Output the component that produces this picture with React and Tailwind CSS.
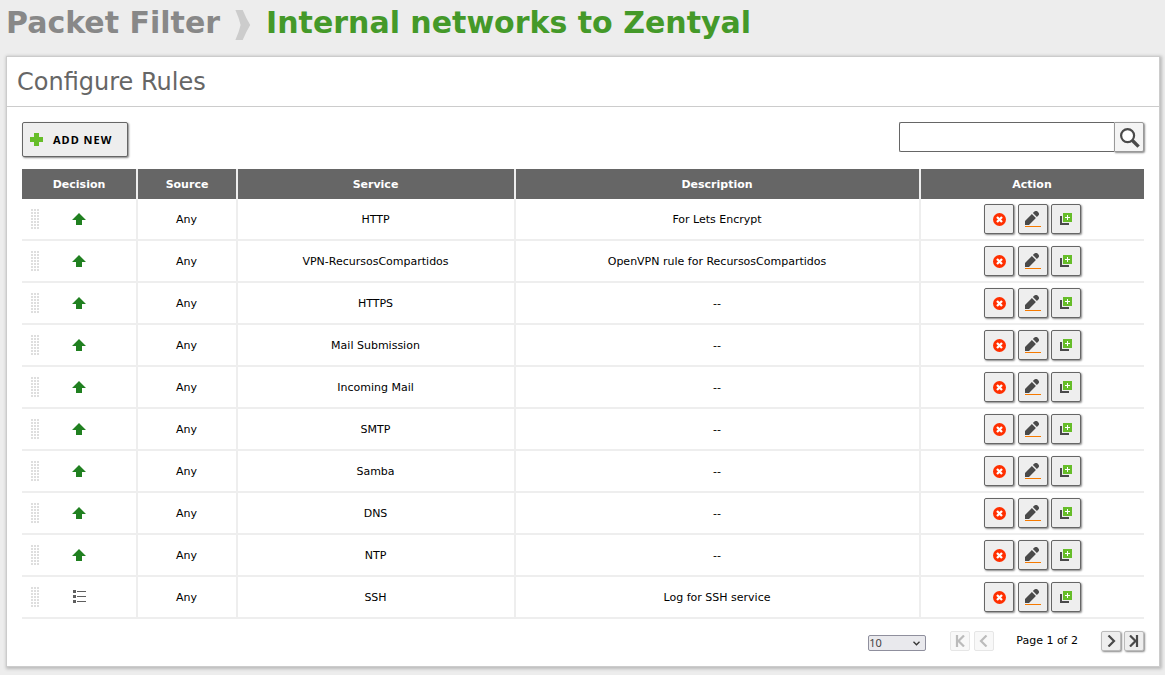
import React from "react";

const rules = [
  { decision: "accept", source: "Any", service: "HTTP", description: "For Lets Encrypt" },
  { decision: "accept", source: "Any", service: "VPN-RecursosCompartidos", description: "OpenVPN rule for RecursosCompartidos" },
  { decision: "accept", source: "Any", service: "HTTPS", description: "--" },
  { decision: "accept", source: "Any", service: "Mail Submission", description: "--" },
  { decision: "accept", source: "Any", service: "Incoming Mail", description: "--" },
  { decision: "accept", source: "Any", service: "SMTP", description: "--" },
  { decision: "accept", source: "Any", service: "Samba", description: "--" },
  { decision: "accept", source: "Any", service: "DNS", description: "--" },
  { decision: "accept", source: "Any", service: "NTP", description: "--" },
  { decision: "log", source: "Any", service: "SSH", description: "Log for SSH service" },
];

function Chevron() {
  return (
    <svg width="16" height="30" viewBox="0 0 16 30" aria-hidden="true">
      <path d="M0.4 0H7.7Q11 8 15.2 15Q11 22 7.7 30H0.4Q4 22 5.6 15Q4 8 0.4 0Z" fill="#cccccc" />
    </svg>
  );
}

function PlusIcon() {
  return (
    <svg width="13" height="13" viewBox="0 0 13 13" aria-hidden="true">
      <path d="M4 0H9V4H13V9H9V13H4V9H0V4H4Z" fill="#66bd29" />
    </svg>
  );
}

function SearchIcon() {
  return (
    <svg width="22" height="22" viewBox="0 0 22 22" aria-hidden="true">
      <circle cx="9.6" cy="9.6" r="6.5" fill="#fff" stroke="#4a4a4a" strokeWidth="2.2" />
      <path d="M14.2 14.2L20.6 20.6" stroke="#4a4a4a" strokeWidth="3.4" />
    </svg>
  );
}

function DragHandle() {
  const dots = [];
  for (let y = 0; y < 7; y++) {
    for (let x = 0; x < 3; x++) {
      dots.push(<rect key={`${x}-${y}`} x={x * 3} y={y * 3} width="2" height="2" />);
    }
  }
  return (
    <svg width="8" height="20" viewBox="0 0 8 20" fill="#dedede" aria-hidden="true">
      {dots}
    </svg>
  );
}

function AcceptIcon() {
  return (
    <svg width="14" height="12" viewBox="0 0 14 12" role="img" aria-label="Accept">
      <path d="M7 0L14 7H10V12H4V7H0Z" fill="#208020" />
    </svg>
  );
}

function LogIcon() {
  return (
    <svg width="13" height="14" viewBox="0 0 13 14" fill="#5f5f5f" shapeRendering="crispEdges" role="img" aria-label="Log">
      <path d="M0 0H3V3H0ZM0 5H3V8H0ZM0 10H3V13H0ZM4 1H13V2H4ZM4 6H13V7H4ZM4 11H13V12H4Z" />
    </svg>
  );
}

function DeleteIcon() {
  return (
    <svg width="13" height="13" viewBox="0 0 13 13" aria-hidden="true">
      <circle cx="6.5" cy="6.5" r="6.5" fill="#ff2f00" />
      <path d="M4 4L9 9M9 4L4 9" stroke="#fff" strokeWidth="2.3" />
    </svg>
  );
}

function EditIcon() {
  return (
    <svg width="16" height="16" viewBox="0 0 16 16" aria-hidden="true">
      <path d="M0 14V10L6.9 3.1L10.9 7.1L4 14Z" fill="#4a4a4a" />
      <path d="M7.9 2.1L9.4 0.6Q11.3 -0.9 13 1Q14.9 2.7 13.4 4.6L11.9 6.1Z" fill="#4a4a4a" />
      <path d="M0 15H16V16H0Z" fill="#f57900" />
    </svg>
  );
}

function CloneIcon() {
  return (
    <svg width="12" height="12" viewBox="0 0 12 12" shapeRendering="crispEdges" aria-hidden="true">
      <path d="M0 3H2V10H9V12H0Z" fill="#4a4a4a" />
      <path d="M3 0H12V9H3Z" fill="#66bd29" />
      <path d="M7 2H8V4H10V5H8V7H7V5H5V4H7Z" fill="#fff" />
    </svg>
  );
}

function ActionButton({ label, children }) {
  return (
    <button
      type="button"
      aria-label={label}
      className="inline-flex size-[30px] items-center justify-center rounded-xs border border-[#666] bg-[#eee] align-middle shadow-[1px_1px_2px_#888]"
    >
      {children}
    </button>
  );
}

function PagerButton({ label, disabled, path }) {
  return (
    <button
      type="button"
      aria-label={label}
      disabled={disabled}
      className="flex size-5 items-center justify-center rounded-xs border border-[#bbb] bg-[#eee] text-[#4a4a4a] shadow-[1px_1px_2px_#888] disabled:border-[#e6e6e6] disabled:bg-[#f8f8f8] disabled:text-[#bbb] disabled:shadow-none"
    >
      <svg width="12" height="12" viewBox="0 0 12 12" fill="none" stroke="currentColor" strokeWidth="2.2" aria-hidden="true">
        <path d={path} />
      </svg>
    </button>
  );
}

const headCell = "h-[30px] border-r-2 border-[#eee] bg-[#666] p-0 pt-0.5 font-bold text-white last:border-r-0";
const bodyCell = "h-[42px] border-r-2 border-b-2 border-[#eee] p-0 last:border-r-0";
const textCell = "h-[42px] border-r-2 border-b-2 border-[#eee] p-0 pt-0.5 pr-px";

export default function App() {
  return (
    <div className="min-h-screen bg-[#ededed] pb-2 font-['DejaVu_Sans',sans-serif] text-[11px] text-black">
      <h1 className="flex h-14 items-start gap-[15px] px-1.5 pt-[5px] text-[30px] leading-[35px] font-bold">
        <a href="#packet-filter" className="text-[#888]">Packet Filter</a>
        <span className="pt-[5px]"><Chevron /></span>
        <span className="text-[#449929]">Internal networks to Zentyal</span>
      </h1>

      <main className="mr-[5px] ml-1.5 border border-[#ccc] bg-white shadow-[1px_1px_3px_1px_#bbb]">
        <h2 className="border-b border-[#ccc] px-2.5 pt-0.5 text-2xl leading-[47px] text-[#666]">Configure Rules</h2>

        <div className="p-[15px]">
          <div className="flex items-start justify-between">
            <button
              type="button"
              className="flex h-[35px] items-center gap-2.5 rounded-xs border border-[#666] bg-[#eee] pr-[15px] pl-[7px] font-['Noto_Sans',sans-serif] font-bold tracking-[1px] shadow-[1px_1px_2px_#888]"
            >
              <PlusIcon />
              <span className="pt-0.5">ADD NEW</span>
            </button>
            <form className="flex" onSubmit={(e) => e.preventDefault()}>
              <input
                type="text"
                aria-label="Search"
                className="h-[30px] w-[215px] rounded-l-xs border border-r-0 border-[#666] bg-white px-2 outline-none"
              />
              <button
                type="submit"
                aria-label="Search"
                className="flex size-[30px] items-center justify-center rounded-r-xs border border-[#999] bg-[#f4f4f4] shadow-[1px_1px_2px_#888]"
              >
                <SearchIcon />
              </button>
            </form>
          </div>

          <table className="mt-3 w-full table-fixed border-separate border-spacing-0 text-center">
            <thead>
              <tr>
                <th className={`${headCell} w-[116px]`}>Decision</th>
                <th className={`${headCell} w-[100px]`}>Source</th>
                <th className={`${headCell} w-[278px] pr-px`}>Service</th>
                <th className={`${headCell} pr-px`}>Description</th>
                <th className={`${headCell} w-[223px] pr-px`}>Action</th>
              </tr>
            </thead>
            <tbody>
              {rules.map((rule) => (
                <tr key={rule.service}>
                  <td className={bodyCell}>
                    <div className="grid grid-cols-[8px_1fr_8px] items-center px-[9px]">
                      <DragHandle />
                      <span className="flex justify-center">
                        {rule.decision === "accept" ? <AcceptIcon /> : <LogIcon />}
                      </span>
                    </div>
                  </td>
                  <td className={textCell}>{rule.source}</td>
                  <td className={textCell}>{rule.service}</td>
                  <td className={textCell}>{rule.description}</td>
                  <td className={bodyCell}>
                    <ActionButton label="Delete"><DeleteIcon /></ActionButton>{" "}
                    <ActionButton label="Edit"><EditIcon /></ActionButton>{" "}
                    <ActionButton label="Clone"><CloneIcon /></ActionButton>
                  </td>
                </tr>
              ))}
            </tbody>
          </table>

          <div className="mt-3 flex items-center justify-end">
            <div className="relative mt-1 mr-6 flex">
              <select
                aria-label="Rows per page"
                defaultValue="10"
                className="h-4 w-[58px] appearance-none rounded-xs border border-[#8f8f9d] bg-[#e9e9ed] pb-0.5 font-['Noto_Sans',sans-serif] leading-none text-[#444]"
              >
                <option>10</option>
                <option>50</option>
                <option>100</option>
              </select>
              <svg className="pointer-events-none absolute top-1.5 right-1.5" width="7" height="5" viewBox="0 0 7 5" fill="none" stroke="#333" strokeWidth="1.3" aria-hidden="true">
                <path d="M0.5 0.8L3.5 3.8L6.5 0.8" />
              </svg>
            </div>
            <div className="flex gap-1">
              <PagerButton label="First page" disabled path="M3 0V12M10 0.5L4.5 6L10 11.5" />
              <PagerButton label="Previous page" disabled path="M8.5 0.5L3 6L8.5 11.5" />
            </div>
            <span className="mr-[23px] ml-[22px]">Page 1 of 2</span>
            <div className="flex gap-[3px]">
              <PagerButton label="Next page" path="M3.5 0.5L9 6L3.5 11.5" />
              <PagerButton label="Last page" path="M9 0V12M2 0.5L7.5 6L2 11.5" />
            </div>
          </div>
        </div>
      </main>
    </div>
  );
}
